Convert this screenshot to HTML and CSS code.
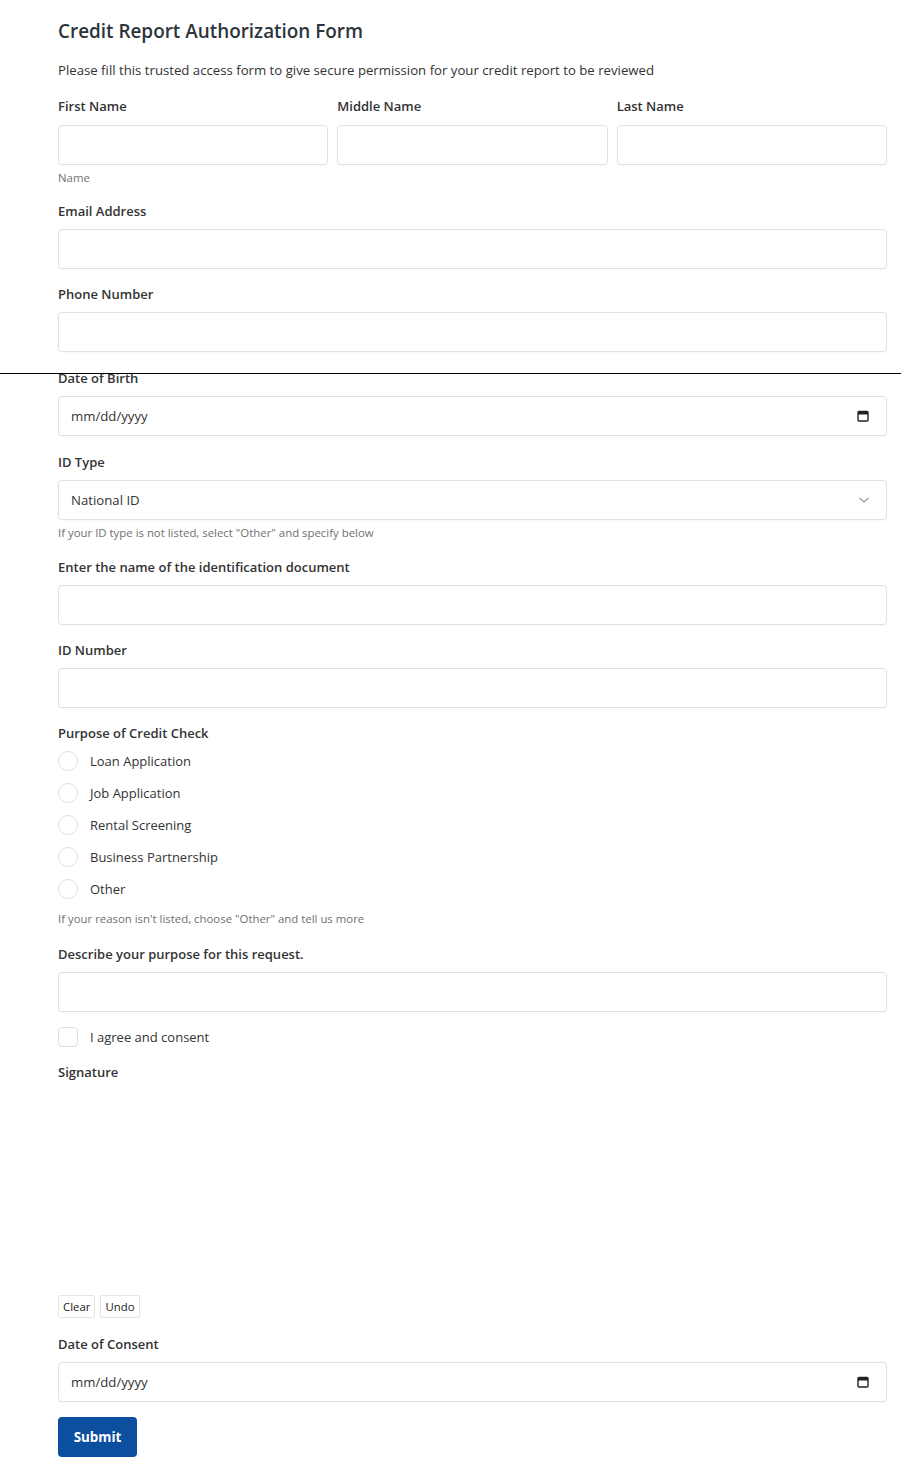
FILE: index.html
```html
<!DOCTYPE html>
<html lang="en">
<head>
<meta charset="utf-8">
<title>Credit Report Authorization Form</title>
<link rel="stylesheet" href="styles.css">
</head>
<body>
<div class="page-rule"></div>
<form class="form">
  <h1 class="title">Credit Report Authorization Form</h1>
  <p class="intro">Please fill this trusted access form to give secure permission for your credit report to be reviewed</p>

  <div class="field">
    <div class="name-row">
      <div class="name-col">
        <label class="label">First Name</label>
        <input class="input" type="text">
      </div>
      <div class="name-col">
        <label class="label">Middle Name</label>
        <input class="input" type="text">
      </div>
      <div class="name-col">
        <label class="label">Last Name</label>
        <input class="input" type="text">
      </div>
    </div>
    <div class="help help-name">Name</div>
  </div>

  <div class="field">
    <label class="label">Email Address</label>
    <input class="input" type="email">
  </div>

  <div class="field">
    <label class="label">Phone Number</label>
    <input class="input" type="tel">
  </div>

  <div class="field field-dob">
    <label class="label">Date of Birth</label>
    <div class="input date-box">
      <span class="date-text">mm/dd/yyyy</span>
      <svg class="cal-icon" width="12" height="12" viewBox="0 0 12 12"><rect x="1" y="1.5" width="10" height="9.5" rx="1" fill="none" stroke="#222" stroke-width="1.4"/><rect x="1" y="1.5" width="10" height="3" fill="#222"/></svg>
    </div>
  </div>

  <div class="field">
    <label class="label">ID Type</label>
    <div class="input select-box">
      <span class="select-text">National ID</span>
      <svg class="chev" width="12" height="8" viewBox="0 0 12 8"><path d="M1.5 2 L6 6 L10.5 2" fill="none" stroke="#9a9a9a" stroke-width="1.2"/></svg>
    </div>
    <div class="help help-id">If your ID type is not listed, select "Other" and specify below</div>
  </div>

  <div class="field">
    <label class="label">Enter the name of the identification document</label>
    <input class="input" type="text">
  </div>

  <div class="field">
    <label class="label">ID Number</label>
    <input class="input" type="text">
  </div>

  <div class="field">
    <label class="label label-tight">Purpose of Credit Check</label>
    <div class="radio-list">
      <label class="choice"><span class="radio"></span>Loan Application</label>
      <label class="choice"><span class="radio"></span>Job Application</label>
      <label class="choice"><span class="radio"></span>Rental Screening</label>
      <label class="choice"><span class="radio"></span>Business Partnership</label>
      <label class="choice"><span class="radio"></span>Other</label>
    </div>
    <div class="help help-radio">If your reason isn't listed, choose "Other" and tell us more</div>
  </div>

  <div class="field">
    <label class="label">Describe your purpose for this request.</label>
    <input class="input" type="text">
  </div>

  <div class="field">
    <label class="choice choice-check"><span class="checkbox"></span>I agree and consent</label>
  </div>

  <div class="field field-sig">
    <label class="label">Signature</label>
    <div class="sig-pad"></div>
    <div class="sig-actions">
      <button type="button" class="mini-btn">Clear</button>
      <button type="button" class="mini-btn">Undo</button>
    </div>
  </div>

  <div class="field">
    <label class="label">Date of Consent</label>
    <div class="input date-box">
      <span class="date-text">mm/dd/yyyy</span>
      <svg class="cal-icon" width="12" height="12" viewBox="0 0 12 12"><rect x="1" y="1.5" width="10" height="9.5" rx="1" fill="none" stroke="#222" stroke-width="1.4"/><rect x="1" y="1.5" width="10" height="3" fill="#222"/></svg>
    </div>
  </div>

  <button type="button" class="submit">Submit</button>
</form>
</body>
</html>
```

FILE: styles.css
```css
* { box-sizing: border-box; }

html, body {
  margin: 0;
  padding: 0;
  background: #ffffff;
}

body {
  font-family: "Open Sans", "Noto Sans", "Liberation Sans", sans-serif;
  color: #2f3338;
  font-size: 13px;
  position: relative;
}

.page-rule {
  position: absolute;
  left: 0;
  right: 0;
  top: 373px;
  height: 1px;
  background: #000;
  z-index: 2;
}

.form {
  width: 829px;
  margin-left: 58px;
  padding-top: 17px;
  padding-bottom: 20px;
}

.title {
  margin: 0;
  font-size: 18.9px;
  line-height: 28px;
  font-weight: 600;
  color: #2c343c;
}

.intro {
  margin: 15px 0 16px;
  font-size: 13.2px;
  line-height: 20px;
  color: #333;
}

.field {
  margin-bottom: 15px;
}

.field-dob {
  padding-top: 1px;
  margin-bottom: 16px;
}

.label {
  display: block;
  font-size: 13px;
  line-height: 20px;
  font-weight: 600;
  color: #333;
  margin-bottom: 8px;
}

.name-row .label {
  margin-bottom: 9px;
}

.label-tight {
  margin-bottom: 2px;
}

.name-row {
  display: grid;
  grid-template-columns: repeat(3, 1fr);
  column-gap: 9px;
}

.input {
  display: block;
  width: 100%;
  height: 40px;
  border: 1px solid #e1e1e1;
  border-radius: 4px;
  background: #fff;
  box-shadow: 0 1px 2px rgba(0, 0, 0, 0.03);
  font: inherit;
  font-size: 13px;
  padding: 0 12px;
  outline: none;
}

.date-box,
.select-box {
  display: flex;
  align-items: center;
  justify-content: space-between;
  color: #333;
}

.date-text,
.select-text {
  font-size: 13.2px;
}

.cal-icon {
  margin-right: 5px;
}

.chev {
  margin-right: 4px;
}

.help {
  margin-top: 5px;
  font-size: 11.4px;
  line-height: 16px;
  color: #707070;
}

.help-id {
  padding-bottom: 1px;
}

.help-radio {
  margin-top: 6px;
  padding-bottom: 2px;
}

.radio-list {
  display: flex;
  flex-direction: column;
}

.choice {
  display: flex;
  align-items: center;
  height: 32px;
  font-size: 13px;
  color: #333;
}

.choice-check {
  height: 20px;
  margin-top: 14px;
  margin-bottom: 14px;
}

.radio,
.checkbox {
  display: inline-block;
  width: 20px;
  height: 20px;
  border: 1px solid #e0e0e0;
  background: #fff;
  margin-right: 12px;
  flex: none;
}

.radio { border-radius: 50%; }
.checkbox { border-radius: 4px; }

.sig-pad {
  height: 205px;
}

.field-sig {
  margin-bottom: 16px;
}

.sig-actions {
  display: flex;
  gap: 5px;
}

.mini-btn {
  font: inherit;
  font-size: 11.4px;
  line-height: 14px;
  height: 23px;
  padding: 0 4px;
  border: 1px solid #e4e4e4;
  border-radius: 2px;
  background: #fff;
  color: #222;
}

.submit {
  display: block;
  margin-top: 15px;
  width: 79px;
  height: 40px;
  border: none;
  border-radius: 4px;
  background: #0b4f9e;
  color: #fff;
  font: inherit;
  font-size: 13.4px;
  font-weight: 700;
}
```
